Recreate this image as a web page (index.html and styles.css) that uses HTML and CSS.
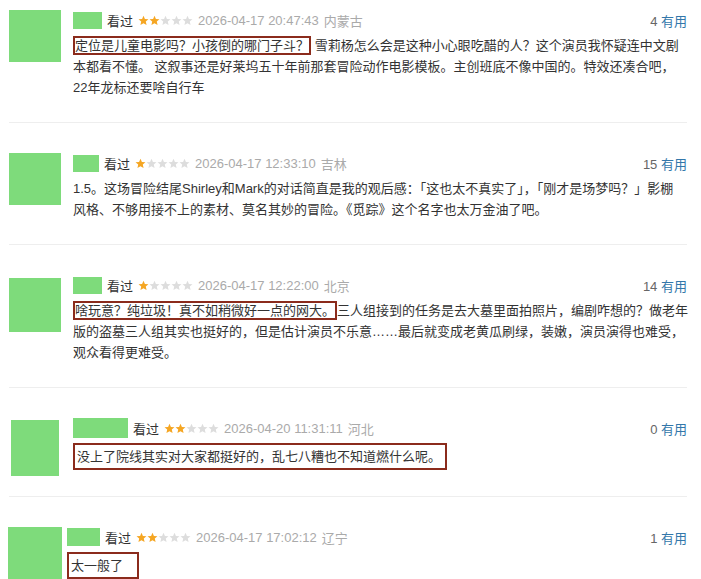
FILE: index.html
```html
<!DOCTYPE html>
<html lang="zh-CN">
<head>
    <meta charset="UTF-8">
    <title>短评</title>
    <link rel="stylesheet" href="styles.css">
</head>
<body>
    <svg width="0" height="0" class="defs">
        <symbol id="star" viewBox="0 0 24 24">
            <polygon points="12,1.5 15.1,8.6 22.8,9.3 17,14.4 18.7,22 12,18 5.3,22 7,14.4 1.2,9.3 8.9,8.6"/>
        </symbol>
    </svg>

    <div class="reviews">
        <!-- 1 -->
        <div class="review">
            <div class="avatar"></div>
            <div class="review-body">
                <div class="review-head">
                    <span class="name"></span>
                    <span class="status">看过</span>
                    <span class="stars">
                        <svg class="star on"><use href="#star"/></svg><svg class="star on"><use href="#star"/></svg><svg class="star"><use href="#star"/></svg><svg class="star"><use href="#star"/></svg><svg class="star"><use href="#star"/></svg>
                    </span>
                    <span class="time">2026-04-17 20:47:43</span>
                    <span class="place">内蒙古</span>
                    <span class="votes"><span class="count">4</span> <a>有用</a></span>
                </div>
                <p class="review-text"><span class="mark">定位是儿童电影吗？小孩倒的哪门子斗？</span> 雪莉杨怎么会是这种小心眼吃醋的人？这个演员我怀疑连中文剧<br>本都看不懂。 这叙事还是好莱坞五十年前那套冒险动作电影模板。主创班底不像中国的。特效还凑合吧，<br>22年龙标还要啥自行车</p>
            </div>
        </div>

        <!-- 2 -->
        <div class="review">
            <div class="avatar"></div>
            <div class="review-body">
                <div class="review-head">
                    <span class="name name-narrow"></span>
                    <span class="status">看过</span>
                    <span class="stars">
                        <svg class="star on"><use href="#star"/></svg><svg class="star"><use href="#star"/></svg><svg class="star"><use href="#star"/></svg><svg class="star"><use href="#star"/></svg><svg class="star"><use href="#star"/></svg>
                    </span>
                    <span class="time">2026-04-17 12:33:10</span>
                    <span class="place">吉林</span>
                    <span class="votes"><span class="count">15</span> <a>有用</a></span>
                </div>
                <p class="review-text">1.5。这场冒险结尾Shirley和Mark的对话简直是我的观后感：「这也太不真实了」，「刚才是场梦吗？」影棚<br>风格、不够用接不上的素材、莫名其妙的冒险。《觅踪》这个名字也太万金油了吧。</p>
            </div>
        </div>

        <!-- 3 -->
        <div class="review">
            <div class="avatar avatar-tall"></div>
            <div class="review-body">
                <div class="review-head">
                    <span class="name"></span>
                    <span class="status">看过</span>
                    <span class="stars">
                        <svg class="star on"><use href="#star"/></svg><svg class="star"><use href="#star"/></svg><svg class="star"><use href="#star"/></svg><svg class="star"><use href="#star"/></svg><svg class="star"><use href="#star"/></svg>
                    </span>
                    <span class="time">2026-04-17 12:22:00</span>
                    <span class="place">北京</span>
                    <span class="votes"><span class="count">14</span> <a>有用</a></span>
                </div>
                <p class="review-text"><span class="mark">啥玩意？纯垃圾！真不如稍微好一点的网大。</span>三人组接到的任务是去大墓里面拍照片，编剧咋想的？做老年<br>版的盗墓三人组其实也挺好的，但是估计演员不乐意……最后就变成老黄瓜刷绿，装嫩，演员演得也难受，<br>观众看得更难受。</p>
            </div>
        </div>

        <!-- 4 -->
        <div class="review review-short">
            <div class="avatar avatar-slim"></div>
            <div class="review-body">
                <div class="review-head">
                    <span class="name name-wide"></span>
                    <span class="status">看过</span>
                    <span class="stars">
                        <svg class="star on"><use href="#star"/></svg><svg class="star on"><use href="#star"/></svg><svg class="star"><use href="#star"/></svg><svg class="star"><use href="#star"/></svg><svg class="star"><use href="#star"/></svg>
                    </span>
                    <span class="time">2026-04-20 11:31:11</span>
                    <span class="place">河北</span>
                    <span class="votes"><span class="count">0</span> <a>有用</a></span>
                </div>
                <p class="review-text"><span class="mark mark-block">没上了院线其实对大家都挺好的，乱七八糟也不知道燃什么呢。</span></p>
            </div>
        </div>

        <!-- 5 -->
        <div class="review review-short">
            <div class="avatar avatar-big"></div>
            <div class="review-body">
                <div class="review-head">
                    <span class="name name-mid"></span>
                    <span class="status">看过</span>
                    <span class="stars">
                        <svg class="star on"><use href="#star"/></svg><svg class="star on"><use href="#star"/></svg><svg class="star"><use href="#star"/></svg><svg class="star"><use href="#star"/></svg><svg class="star"><use href="#star"/></svg>
                    </span>
                    <span class="time">2026-04-17 17:02:12</span>
                    <span class="place">辽宁</span>
                    <span class="votes"><span class="count">1</span> <a>有用</a></span>
                </div>
                <p class="review-text"><span class="mark mark-block mark-wide">太一般了</span></p>
            </div>
        </div>
    </div>
</body>
</html>
```

FILE: styles.css
```css
body {
    margin: 0;
    font-family: "Liberation Sans", Arial, "Noto Sans CJK SC", sans-serif;
    font-size: 13px;
    color: #333;
    background: #fff;
}
.defs {
    position: absolute;
}
.reviews {
    padding: 0 14px 0 9px;
}
.review {
    display: flex;
    gap: 12px;
    padding: 10px 0 24px;
    margin-bottom: 20px;
    border-bottom: 1px solid #eee;
}
.review-short {
    padding-bottom: 20px;
}
.avatar {
    flex-shrink: 0;
    width: 52px;
    height: 52px;
    background: #7edb7b;
}
.avatar-tall {
    height: 54px;
    margin-top: 3px;
}
.avatar-slim {
    width: 48px;
    height: 56px;
    margin-top: 2px;
    margin-left: 2px;
    margin-right: 2px;
}
.avatar-big {
    width: 54px;
    height: 56px;
    margin-left: -1px;
    margin-right: -7px;
}
.review-body {
    flex: 1;
    min-width: 0;
}
.review-head {
    display: flex;
    align-items: center;
    height: 20px;
    gap: 5px;
}
.name {
    width: 29px;
    height: 17px;
    background: #7edb7b;
}
.name-narrow {
    width: 26px;
}
.name-wide {
    width: 55px;
    height: 20px;
}
.name-mid {
    width: 33px;
    height: 18px;
}
.status {
    color: #333;
}
.stars {
    display: flex;
}
.star {
    width: 11px;
    height: 11px;
    fill: #ddd;
}
.star.on {
    fill: #f5a623;
}
.time,
.place {
    color: #aaa;
}
.votes {
    margin-left: auto;
    color: #666;
}
.votes a {
    color: #37a;
}
.review-text {
    margin: 5px -10px 0 0;
    line-height: 21px;
    white-space: nowrap;
}
.mark {
    border: 2px solid #8b2b1c;
}
.mark-block {
    display: inline-block;
    padding: 3px 4px 3px 2px;
    line-height: 17px;
}
.mark-wide {
    padding-right: 14px;
}
```
